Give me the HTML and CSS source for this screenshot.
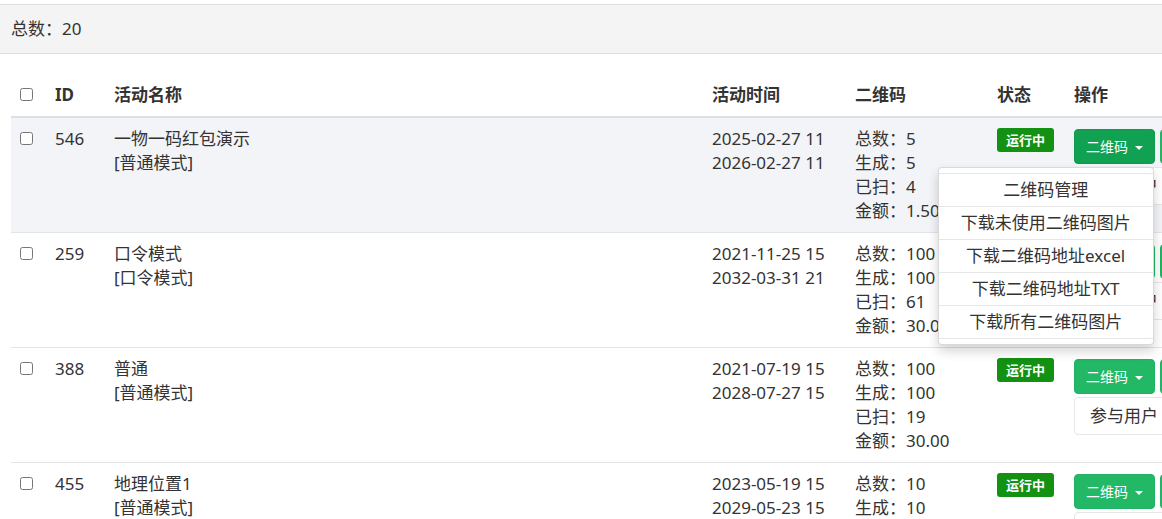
FILE: index.html
```html
<!DOCTYPE html>
<html lang="zh-CN">
<head>
<meta charset="utf-8">
<title>活动列表</title>
<link rel="stylesheet" href="styles.css">
</head>
<body>
<div class="summary">总数：20</div>
<table class="grid">
  <colgroup>
    <col class="w-check"><col class="w-id"><col class="w-name"><col class="w-time"><col class="w-qr"><col class="w-status"><col class="w-action">
  </colgroup>
  <thead>
    <tr>
      <th><input type="checkbox" class="chk"></th>
      <th>ID</th>
      <th>活动名称</th>
      <th>活动时间</th>
      <th>二维码</th>
      <th>状态</th>
      <th>操作</th>
    </tr>
  </thead>
  <tbody>
    <tr class="hover">
      <td><input type="checkbox" class="chk"></td>
      <td>546</td>
      <td>一物一码红包演示<br>[普通模式]</td>
      <td>2025-02-27 11<br>2026-02-27 11</td>
      <td>总数：5<br>生成：5<br>已扫：4<br>金额：1.50</td>
      <td><span class="badge">运行中</span></td>
      <td>
        <div class="actions">
          <div class="dropdown">
            <button class="btn btn-green active">二维码 <span class="caret"></span></button>
            <ul class="menu">
              <li>二维码管理</li>
              <li>下载未使用二维码图片</li>
              <li>下载二维码地址excel</li>
              <li>下载二维码地址TXT</li>
              <li>下载所有二维码图片</li>
            </ul>
          </div>
          <button class="btn btn-green">编辑</button>
          <button class="btn btn-plain">参与用户</button>
        </div>
      </td>
    </tr>
    <tr>
      <td><input type="checkbox" class="chk"></td>
      <td>259</td>
      <td>口令模式<br>[口令模式]</td>
      <td>2021-11-25 15<br>2032-03-31 21</td>
      <td>总数：100<br>生成：100<br>已扫：61<br>金额：30.00</td>
      <td><span class="badge">运行中</span></td>
      <td>
        <div class="actions">
          <button class="btn btn-green">二维码 <span class="caret"></span></button>
          <button class="btn btn-green">编辑</button>
          <button class="btn btn-plain">参与用户</button>
        </div>
      </td>
    </tr>
    <tr>
      <td><input type="checkbox" class="chk"></td>
      <td>388</td>
      <td>普通<br>[普通模式]</td>
      <td>2021-07-19 15<br>2028-07-27 15</td>
      <td>总数：100<br>生成：100<br>已扫：19<br>金额：30.00</td>
      <td><span class="badge">运行中</span></td>
      <td>
        <div class="actions">
          <button class="btn btn-green">二维码 <span class="caret"></span></button>
          <button class="btn btn-green">编辑</button>
          <button class="btn btn-plain">参与用户</button>
        </div>
      </td>
    </tr>
    <tr>
      <td><input type="checkbox" class="chk"></td>
      <td>455</td>
      <td>地理位置1<br>[普通模式]</td>
      <td>2023-05-19 15<br>2029-05-23 15</td>
      <td>总数：10<br>生成：10<br>已扫：2<br>金额：5.00</td>
      <td><span class="badge">运行中</span></td>
      <td>
        <div class="actions">
          <button class="btn btn-green">二维码 <span class="caret"></span></button>
          <button class="btn btn-green">编辑</button>
          <button class="btn btn-plain">参与用户</button>
        </div>
      </td>
    </tr>
  </tbody>
</table>
</body>
</html>
```

FILE: styles.css
```css
html, body {
  margin: 0;
  overflow: hidden;
  background: #fff;
}
body {
  font-family: "Noto Sans", "Noto Sans CJK SC", sans-serif;
  font-size: 17px;
  line-height: 24px;
  color: #333;
}
.summary {
  margin-top: 4px;
  padding: 12px 11px;
  background: #f4f4f4;
  border-top: 1px solid #dddddd;
  border-bottom: 1px solid #dddddd;
}
.grid {
  margin: 20px 0 0 11px;
  border-collapse: collapse;
  table-layout: fixed;
  width: 1255px;
}
.w-check { width: 36px; }
.w-id { width: 59px; }
.w-name { width: 598px; }
.w-time { width: 143px; }
.w-qr { width: 142px; }
.w-status { width: 77px; }
.w-action { width: 200px; }
.grid th, .grid td {
  padding: 9px 8px;
  text-align: left;
  vertical-align: top;
  white-space: nowrap;
}
.grid th:first-child, .grid td:first-child {
  padding-left: 9px;
  padding-right: 0;
}
.grid th {
  font-weight: bold;
  border-bottom: 2px solid #dcdfe3;
}
.grid td {
  border-bottom: 1px solid #e2e4e7;
}
.grid tr.hover td {
  background: #f3f4f8;
}
.chk {
  display: block;
  margin: 5px 0 0;
  width: 13px;
  height: 13px;
}
.badge {
  display: inline-block;
  margin-top: 1px;
  padding: 3px 9px;
  font-size: 13px;
  line-height: 18px;
  font-weight: bold;
  color: #fff;
  background: #139113;
  border-radius: 3px;
}
.actions {
  display: flex;
  flex-wrap: wrap;
  width: 175px;
  gap: 3px 5px;
  margin-top: 2px;
}
.dropdown {
  position: relative;
}
.btn {
  font-family: inherit;
  display: inline-block;
  padding: 6px 11px;
  font-size: 14px;
  line-height: 21px;
  border: 1px solid transparent;
  border-radius: 4px;
  cursor: pointer;
  white-space: nowrap;
}
.btn-green {
  color: #fff;
  background: #22b866;
  border-color: #20b162;
}
.btn-green.active {
  background: #11a152;
  border-color: #0f9a4e;
}
.btn-plain {
  font-size: 17px;
  line-height: 24px;
  padding: 6px 15px;
  color: #333;
  background: #fff;
  border-color: #e6e6e6;
}
.caret {
  display: inline-block;
  width: 0;
  height: 0;
  margin-left: 3px;
  vertical-align: middle;
  border-top: 4px solid #fff;
  border-left: 4px solid transparent;
  border-right: 4px solid transparent;
}
.menu {
  position: absolute;
  z-index: 10;
  top: calc(100% + 3px);
  right: 1px;
  width: 216px;
  box-sizing: border-box;
  margin: 0;
  padding: 5px 0;
  list-style: none;
  background: #fff;
  border: 1px solid rgba(0, 0, 0, 0.15);
  border-radius: 4px;
  box-shadow: 0 6px 12px rgba(0, 0, 0, 0.175);
}
.menu li {
  padding: 4px 0;
  text-align: center;
  font-size: 17px;
  line-height: 24px;
  color: #333;
  border-top: 1px solid #e6e6e6;
}
.menu li:last-child {
  border-bottom: 1px solid #e6e6e6;
}
```
